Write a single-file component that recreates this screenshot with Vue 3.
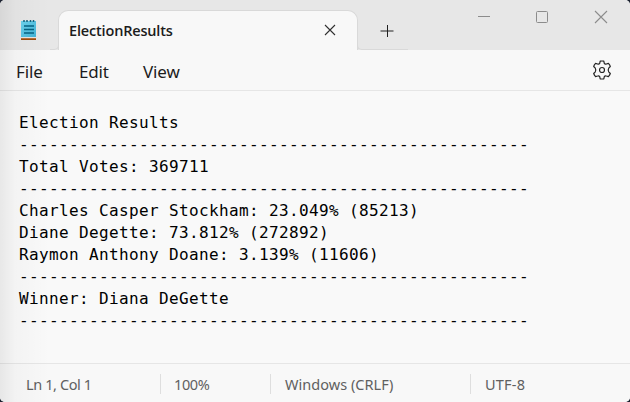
<script setup>
const rule = '-'.repeat(51)
const lines = [
  'Election Results',
  rule,
  'Total Votes: 369711',
  rule,
  'Charles Casper Stockham: 23.049% (85213)',
  'Diane Degette: 73.812% (272892)',
  'Raymon Anthony Doane: 3.139% (11606)',
  rule,
  'Winner: Diana DeGette',
  rule,
]
</script>

<template>
  <div class="window">
    <header class="titlebar">
      <svg class="app-icon" width="18" height="22" viewBox="0 0 18 22">
        <defs>
          <linearGradient id="pad" x1="0" y1="0" x2="1" y2="1">
            <stop offset="0" stop-color="#6dd3ee" />
            <stop offset="1" stop-color="#43b3d6" />
          </linearGradient>
        </defs>
        <path d="M2 18h15v2H2z" fill="#e9e4df" />
        <path d="M2 19.2h15v1.8H2z" fill="#a04c0b" />
        <path d="M2 2h15v16H2z" fill="url(#pad)" />
        <path d="M5 1v2M8 1v2M11.5 1v2M14.5 1v2" stroke="#17637d" stroke-width="1.5" />
        <path d="M5 7h10M5 10.5h10M5 14h10" stroke="#066383" stroke-width="1.7" />
      </svg>
      <div class="tab">
        <span class="tab-name">ElectionResults</span>
        <svg class="tab-close" width="12" height="12" viewBox="0 0 12 12">
          <path d="M1 1l10 10M11 1L1 11" stroke="#303030" stroke-width="1.1" />
        </svg>
      </div>
      <div class="new-tab">
        <svg width="14" height="14" viewBox="0 0 14 14">
          <path d="M.5 7h13" stroke="#858585" stroke-width="2" />
          <path d="M7.5 1v12" stroke="#202020" />
        </svg>
      </div>
      <div class="controls">
        <svg width="14" height="14" viewBox="0 0 14 14"><path d="M2 6.5h12" stroke="#8c8c8c" /></svg>
        <svg width="14" height="14" viewBox="0 0 14 14"><rect x="1.5" y="1.5" width="11" height="11" rx="1" fill="none" stroke="#8c8c8c" /></svg>
        <svg width="14" height="14" viewBox="0 0 14 14"><path d="M1 1l12 12M13 1L1 13" stroke="#8c8c8c" stroke-width="1.1" /></svg>
      </div>
    </header>
    <nav class="menu">
      <span class="file">File</span>
      <span class="edit">Edit</span>
      <span class="view">View</span>
      <svg class="gear" width="20" height="20" viewBox="0 0 20 20" fill="none" stroke="#252525" stroke-width="1.2" stroke-linejoin="round">
        <path d="M8.2 1.2Q10 .8 11.8 1.2L12.3 3.4Q13 4.5 14.4 4L16.4 3.4Q17.8 4.8 18.3 6.5L16.7 8.2Q15.7 10 16.7 11.8L18.3 13.5Q17.8 15.2 16.4 16.6L14.4 16Q13 15.5 12.3 16.6L11.8 18.8Q10 19.2 8.2 18.8L7.7 16.6Q7 15.5 5.6 16L3.6 16.6Q2.2 15.2 1.7 13.5L3.3 11.8Q4.3 10 3.3 8.2L1.7 6.5Q2.2 4.8 3.6 3.4L5.6 4Q7 4.5 7.7 3.4Z" />
        <circle cx="10" cy="10" r="2.5" />
      </svg>
    </nav>
    <main class="editor">
      <div v-for="(line, i) in lines" :key="i" class="line">{{ line }}</div>
    </main>
    <footer class="status">
      <span class="position">Ln 1, Col 1</span>
      <span class="zoom">100%</span>
      <span class="ending">Windows (CRLF)</span>
      <span class="encoding">UTF-8</span>
    </footer>
    <div class="edge"></div>
  </div>
</template>

<style>
body {
  background: #1c2230;
}
</style>

<style scoped>
.window {
  position: relative;
  display: flex;
  flex-direction: column;
  width: 630px;
  height: 402px;
  overflow: hidden;
  border-radius: 5px;
  background: #f9f9f9;
  font-family: 'Noto Sans', 'Open Sans', sans-serif;
  color: #1c1c1c;
}
.titlebar {
  display: flex;
  box-sizing: border-box;
  flex: none;
  height: 50px;
  background: #e7e7e7;
}
.app-icon {
  flex: none;
  margin: 19px 20px 0 19px;
}
.tab {
  position: relative;
  display: flex;
  box-sizing: border-box;
  align-items: center;
  flex: none;
  width: 300px;
  height: 40px;
  margin: 10px 0 0 1px;
  padding: 0 21px 0 10px;
  border: 1px solid #d9d9d9;
  border-bottom: 0;
  border-radius: 10px 10px 0 0;
  background: #f8f8f8;
}
.tab::before,
.tab::after {
  content: '';
  position: absolute;
  bottom: 0;
  width: 8px;
  height: 5px;
  border-bottom: 1px solid #d9d9d9;
  background: #e7e7e7;
}
.tab::before {
  left: -9px;
  border-right: 1px solid #d9d9d9;
  border-bottom-right-radius: 5px;
}
.tab::after {
  right: -9px;
  border-left: 1px solid #d9d9d9;
  border-bottom-left-radius: 5px;
}
.tab-name {
  font: 600 14.5px/20px 'Open Sans', sans-serif;
  letter-spacing: -0.17px;
  white-space: nowrap;
}
.tab-close {
  margin: -1px 0 0 auto;
}
.new-tab {
  box-sizing: border-box;
  width: 42px;
  height: 50px;
  margin-left: 8px;
  padding: 24px 0 0 14px;
  border-bottom: 1px solid #d9d9d9;
}
.new-tab svg,
.controls svg {
  display: block;
}
.controls {
  display: flex;
  gap: 45px;
  margin-left: auto;
  padding: 10px 22px 0 0;
}
.menu {
  display: flex;
  box-sizing: border-box;
  align-items: center;
  flex: none;
  height: 41px;
  padding: 4px 18px 0 16px;
  border-bottom: 1px solid #e6e6e6;
  background: #f8f8f8;
  font-size: 17px;
  line-height: 24px;
}
.file {
  width: 63px;
}
.edit {
  width: 64px;
}
.menu span {
  letter-spacing: -0.15px;
}
.gear {
  margin: -5px 0 0 auto;
}
.editor {
  flex: 1;
  padding: 21px 0 0 19px;
}
.line {
  height: 22px;
  color: #000;
  font: 16px/22px 'DejaVu Sans Mono', monospace;
  letter-spacing: 0.367px;
  white-space: pre;
}
.status {
  display: flex;
  box-sizing: border-box;
  align-items: center;
  flex: none;
  height: 39px;
  padding: 2px 0 0 26px;
  border-top: 1px solid #e6e6e6;
  background: #f8f8f8;
  color: #606060;
  font-size: 14.5px;
  line-height: 20px;
  letter-spacing: -0.4px;
}
.status span {
  box-sizing: border-box;
  white-space: nowrap;
}
.status span + span {
  padding-left: 14px;
  border-left: 1px solid #dedede;
}
.status .position {
  width: 134px;
}
.status .zoom {
  width: 110px;
  padding-left: 13px;
}
.status .ending {
  width: 200px;
  letter-spacing: 0.03px;
}
.status .encoding {
  letter-spacing: 0.2px;
}
.edge {
  position: absolute;
  inset: 0 auto 0 0;
  width: 50px;
  background: linear-gradient(90deg, rgba(0, 0, 0, 0.07), rgba(0, 0, 0, 0.025) 30%, transparent);
  pointer-events: none;
}
</style>
